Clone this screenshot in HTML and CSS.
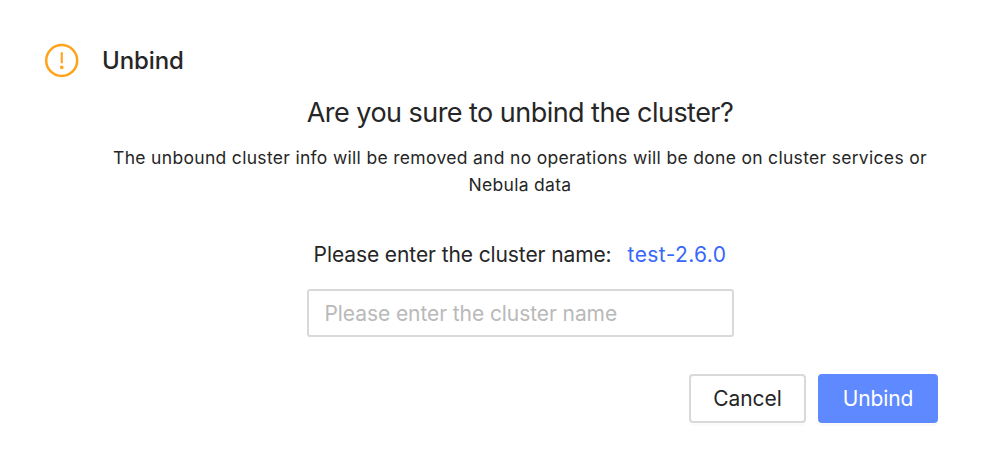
FILE: index.html
```html
<!DOCTYPE html>
<html lang="en">
<head>
<meta charset="utf-8">
<title>Unbind</title>
<link rel="stylesheet" href="styles.css">
</head>
<body>
<main class="dialog">
  <header class="head">
    <svg class="warn" viewBox="0 0 34 34" aria-hidden="true">
      <circle cx="16.7" cy="16.5" r="15.5" fill="none" stroke="#ffa31a" stroke-width="2.5"/>
      <path d="M15.7 8.2h2.1v11h-2.1z" fill="#ffa31a"/>
      <circle cx="16.75" cy="23.4" r="1.8" fill="#ffa31a"/>
    </svg>
    <h1 class="title"><span>Unbind</span></h1>
  </header>
  <section class="content">
    <h2 class="question"><span>Are you sure to unbind the cluster?</span></h2>
    <p class="desc"><span>The unbound cluster info will be removed and no operations will be done on cluster services or</span><br><span>Nebula data</span></p>
    <div class="prompt"><label for="name">Please enter the cluster name:</label><span class="cluster">test-2.6.0</span></div>
    <input class="field" id="name" type="text" placeholder="Please enter the cluster name">
  </section>
  <footer class="actions">
    <button class="btn"><span>Cancel</span></button>
    <button class="btn primary"><span>Unbind</span></button>
  </footer>
</main>
</body>
</html>
```
FILE: styles.css
```css
* { box-sizing: border-box; }
body { margin: 0; background: #fff; color: #262626; font-family: Inter, "Liberation Sans", sans-serif; }
.dialog { width: 985px; height: 457px; padding: 44px 47.5px 0 45px; overflow: hidden; }
.head { display: flex; align-items: center; height: 34px; gap: 23px; }
.warn { width: 34px; height: 34px; overflow: visible; }
.title { margin: 0; font-size: 24px; line-height: 34px; font-weight: 500; letter-spacing: -0.1px; }
.content { display: flex; flex-direction: column; align-items: center; width: 854px; margin-left: 48px; }
.question { margin: 17px 0 0; font-size: 27px; line-height: 36px; font-weight: 400; letter-spacing: -0.54px; white-space: nowrap; }
.desc { margin: 13px 0 0; font-size: 17.5px; line-height: 27px; letter-spacing: 0.31px; text-align: center; white-space: nowrap; }
.prompt { display: flex; gap: 16px; margin-top: 43px; font-size: 21px; line-height: 28px; letter-spacing: -0.1px; white-space: nowrap; }
.cluster { color: #3767fb; letter-spacing: 0.4px; }
.field { width: 427px; height: 48px; margin-top: 20px; padding: 0 16px; border: 2px solid #d9d9d9; border-radius: 3px; font: 21px Inter, sans-serif; letter-spacing: -0.08px; outline: 0; }
.field::placeholder { color: #b9b9b9; opacity: 1; }
.actions { display: flex; justify-content: flex-end; gap: 12px; margin-top: 37px; }
.btn { width: 117px; height: 49px; padding: 0 0 1px 1px; border: 2px solid #d9d9d9; border-radius: 4px; background: #fff; color: #262626; font: 21px Inter, sans-serif; letter-spacing: -0.1px; box-shadow: 0 3px 0 rgba(0,0,0,.016); }
.primary { width: 120px; border-color: #5f89ff; background: #5f89ff; color: #fff; box-shadow: 0 3px 0 rgba(0,0,0,.025); }
```
